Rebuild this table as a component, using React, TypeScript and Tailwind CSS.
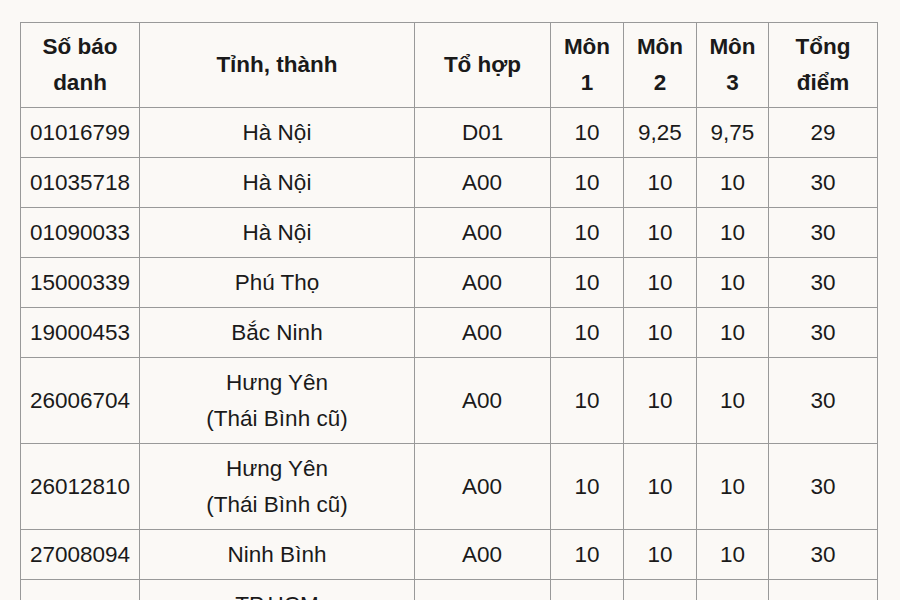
// Bảng điểm thủ khoa — bảng kết quả thi

type Row = {
  sbd: string;
  tinh: string[];
  toHop: string;
  m1: string;
  m2: string;
  m3: string;
  tong: string;
};

const rows: Row[] = [
  { sbd: '01016799', tinh: ['Hà Nội'], toHop: 'D01', m1: '10', m2: '9,25', m3: '9,75', tong: '29' },
  { sbd: '01035718', tinh: ['Hà Nội'], toHop: 'A00', m1: '10', m2: '10', m3: '10', tong: '30' },
  { sbd: '01090033', tinh: ['Hà Nội'], toHop: 'A00', m1: '10', m2: '10', m3: '10', tong: '30' },
  { sbd: '15000339', tinh: ['Phú Thọ'], toHop: 'A00', m1: '10', m2: '10', m3: '10', tong: '30' },
  { sbd: '19000453', tinh: ['Bắc Ninh'], toHop: 'A00', m1: '10', m2: '10', m3: '10', tong: '30' },
  { sbd: '26006704', tinh: ['Hưng Yên', '(Thái Bình cũ)'], toHop: 'A00', m1: '10', m2: '10', m3: '10', tong: '30' },
  { sbd: '26012810', tinh: ['Hưng Yên', '(Thái Bình cũ)'], toHop: 'A00', m1: '10', m2: '10', m3: '10', tong: '30' },
  { sbd: '27008094', tinh: ['Ninh Bình'], toHop: 'A00', m1: '10', m2: '10', m3: '10', tong: '30' },
  { sbd: '79000000', tinh: ['TP.HCM', '(Bình Dương cũ)'], toHop: 'A00', m1: '10', m2: '10', m3: '10', tong: '30' },
];

const cell = 'border border-[#999999] p-0 align-middle';

export default function App() {
  return (
    <div className="h-[600px] w-[900px] overflow-hidden bg-[#fbf9f6] pt-[22px] pl-[20px] text-[#1a1a1a] [font-family:'Liberation_Sans',Arial,sans-serif]">
      <table className="table-fixed border-collapse text-[22.5px] leading-[36px]">
        <colgroup>
          <col className="w-[119px]" />
          <col className="w-[275px]" />
          <col className="w-[136px]" />
          <col className="w-[73px]" />
          <col className="w-[73px]" />
          <col className="w-[72px]" />
          <col className="w-[109px]" />
        </colgroup>
        <thead>
          <tr className="h-[85px] font-bold">
            <th className={`${cell} text-center`}>Số báo<br />danh</th>
            <th className={`${cell} text-center`}>Tỉnh, thành</th>
            <th className={`${cell} text-center`}>Tổ hợp</th>
            <th className={`${cell} text-center`}>Môn<br />1</th>
            <th className={`${cell} text-center`}>Môn<br />2</th>
            <th className={`${cell} text-center`}>Môn<br />3</th>
            <th className={`${cell} text-center`}>Tổng<br />điểm</th>
          </tr>
        </thead>
        <tbody>
          {rows.map((r) => (
            <tr key={r.sbd} className={r.tinh.length > 1 ? 'h-[86px]' : 'h-[50px]'}>
              <td className={`${cell} pl-[9px] text-left`}>{r.sbd}</td>
              <td className={`${cell} text-center`}>
                {r.tinh.map((t) => (
                  <div key={t}>{t}</div>
                ))}
              </td>
              <td className={`${cell} pl-[47px] text-left`}>{r.toHop}</td>
              <td className={`${cell} text-center`}>{r.m1}</td>
              <td className={`${cell} text-center`}>{r.m2}</td>
              <td className={`${cell} text-center`}>{r.m3}</td>
              <td className={`${cell} text-center`}>{r.tong}</td>
            </tr>
          ))}
        </tbody>
      </table>
    </div>
  );
}
